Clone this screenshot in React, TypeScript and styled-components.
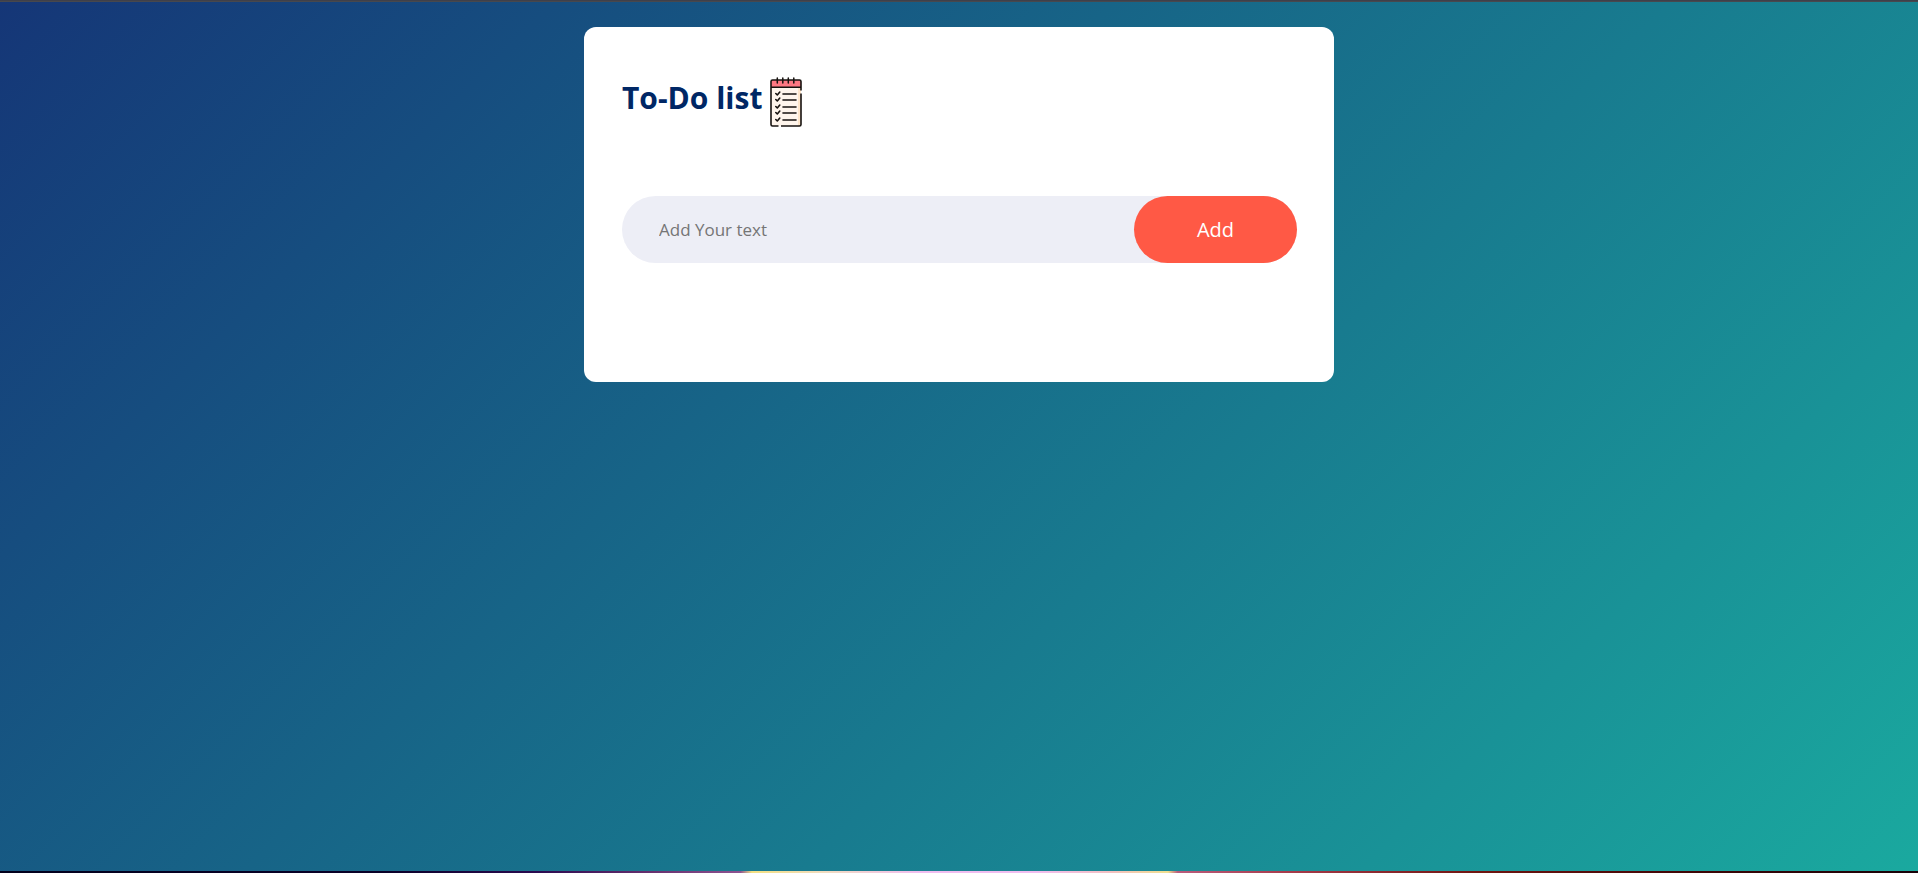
import React, { useState } from "react";
import styled, { createGlobalStyle } from "styled-components";

const GlobalStyle = createGlobalStyle`
  * {
    box-sizing: border-box;
    margin: 0;
    padding: 0;
  }
  body {
    font-family: "Open Sans", "Noto Sans", sans-serif;
  }
`;

const Page = styled.div`
  display: flex;
  flex-direction: column;
  min-height: 100vh;
  background: linear-gradient(135deg, #153677, #1aa99f);
`;

const TopEdge = styled.div`
  height: 2px;
  background: linear-gradient(#3b3c48, #4b4c50);
`;

const BottomEdge = styled.div`
  height: 2px;
  background: linear-gradient(
    90deg,
    #02001c 0%,
    #0a0028 20%,
    #2a0a50 28%,
    #67306f 34%,
    #8d5391 38.6%,
    #f3e082 39.2%,
    #f0dcc0 43%,
    #f0bdf0 48%,
    #f0bdf0 54%,
    #f2c0c0 58%,
    #f0e090 60.9%,
    #b95c7c 61.4%,
    #a83c4c 67%,
    #701510 77%,
    #400505 88%,
    #180008 100%
  );
`;

const Main = styled.main`
  flex: 1;
  padding: 25px 16px;
`;

const Card = styled.section`
  width: 100%;
  max-width: 750px;
  min-height: 355px;
  margin: 0 auto;
  padding: 50px 37px 38px 38px;
  border-radius: 12px;
  background: #fff;
`;

const Header = styled.header`
  display: flex;
  align-items: center;
  gap: 8px;
  margin-bottom: 69px;
`;

const Title = styled.h1`
  padding-bottom: 8px;
  color: #002765;
  font-size: 30px;
  line-height: 40px;
  font-weight: 700;
`;

const Form = styled.form`
  display: flex;
  align-items: center;
  height: 67px;
  border-radius: 34px;
  background: #edeef6;
`;

const TextInput = styled.input`
  flex: 1;
  min-width: 0;
  height: 100%;
  padding: 0 16px 0 37px;
  border: none;
  outline: none;
  background: transparent;
  font: inherit;
  font-size: 17px;
  &::placeholder {
    color: #757575;
  }
`;

const AddButton = styled.button`
  width: 163px;
  height: 100%;
  border: none;
  border-radius: 34px;
  background: #ff5945;
  color: #fff;
  font: inherit;
  font-size: 20px;
  cursor: pointer;
`;

const Tasks = styled.ul`
  margin-top: 24px;
  list-style: none;
`;

const Task = styled.li`
  padding: 8px 37px;
  font-size: 17px;
`;

const rows = [17, 23, 30, 36, 43];

function ListIcon() {
  return (
    <svg width="32" height="50" viewBox="0 0 32 50" fill="none" aria-hidden="true">
      <rect x="1" y="3" width="30" height="46" rx="1.5" fill="#fff5ec" />
      <path d="M28 10h3v37q0 2-2 2h-1z" fill="#ffe6cb" />
      <path d="M1 10V5q0-2 2-2h26q2 0 2 2v5z" fill="#ff7882" />
      <path
        d="M8.500 49H2.500Q1 49 1 47.500V4.500Q1 3 2.500 3h27Q31 3 31 4.500V13.500M31 16.500v31Q31 49 29.500 49H11M1 10.300h30"
        stroke="#17120f"
        strokeWidth="1.6"
      />
      <path
        d="M7.300 1v5M12.800 1v5M18.300 1v5M23.800 1v5"
        stroke="#17120f"
        strokeWidth="1.5"
        strokeLinecap="round"
      />
      {rows.map((y) => (
        <path
          key={y}
          d={`M5.800 ${y - 0.5}l1.500 1.500 2.500-3M13 ${y}h13`}
          stroke="#17120f"
          strokeWidth="1.6"
          strokeLinecap="round"
          strokeLinejoin="round"
        />
      ))}
    </svg>
  );
}

export default function App() {
  const [text, setText] = useState("");
  const [tasks, setTasks] = useState<string[]>([]);

  const addTask = (event: React.FormEvent) => {
    event.preventDefault();
    if (text.trim()) {
      setTasks([...tasks, text.trim()]);
      setText("");
    }
  };

  return (
    <Page>
      <GlobalStyle />
      <TopEdge />
      <Main>
        <Card>
          <Header>
            <Title>To-Do list</Title>
            <ListIcon />
          </Header>
          <Form onSubmit={addTask}>
            <TextInput
              type="text"
              aria-label="Add Your text"
              placeholder="Add Your text"
              value={text}
              onChange={(event) => setText(event.target.value)}
            />
            <AddButton type="submit">Add</AddButton>
          </Form>
          {tasks.length > 0 && (
            <Tasks>
              {tasks.map((task, index) => (
                <Task key={index}>{task}</Task>
              ))}
            </Tasks>
          )}
        </Card>
      </Main>
      <BottomEdge />
    </Page>
  );
}
